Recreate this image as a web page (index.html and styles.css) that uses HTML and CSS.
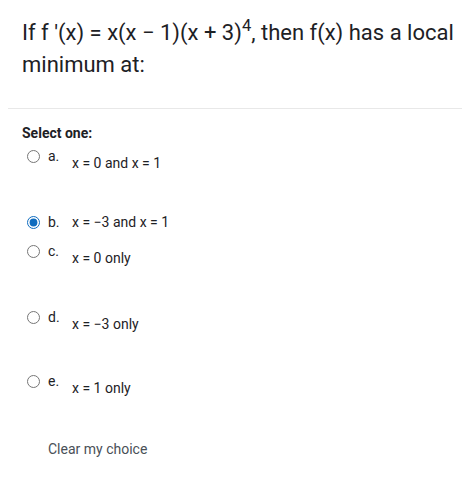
FILE: index.html
```html
<!DOCTYPE html>
<html>
<head>
<meta charset="utf-8">
<link rel="stylesheet" href="styles.css">
</head>
<body>
<div class="page">
  <div class="qtext">If f '(x) = x(x − 1)(x + 3)<sup>4</sup>, then f(x) has a local minimum at:</div>
  <div class="sep"></div>
  <div class="ablock">
    <div class="prompt">Select one:</div>
    <div class="answers">
      <div class="opt ha">
        <input type="radio" name="q" class="radio">
        <span class="letter">a.</span>
        <div class="ans shift7">x = 0 and x = 1</div>
      </div>
      <div class="opt hb">
        <input type="radio" name="q" class="radio" checked>
        <span class="letter">b.</span>
        <div class="ans">x = −3 and x = 1</div>
      </div>
      <div class="opt hc">
        <input type="radio" name="q" class="radio">
        <span class="letter">c.</span>
        <div class="ans shift7">x = 0 only</div>
      </div>
      <div class="opt hd">
        <input type="radio" name="q" class="radio">
        <span class="letter">d.</span>
        <div class="ans shift7">x = −3 only</div>
      </div>
      <div class="opt he">
        <input type="radio" name="q" class="radio">
        <span class="letter">e.</span>
        <div class="ans shift7">x = 1 only</div>
      </div>
    </div>
    <div class="clear">Clear my choice</div>
  </div>
</div>
</body>
</html>
```
FILE: styles.css
```css
html, body {
  margin: 0;
  padding: 0;
  background: #ffffff;
}
body {
  font-family: Roboto, "Liberation Sans", sans-serif;
  color: #1d2125;
}
.page {
  padding: 17px 0 0 8px;
}
.qtext {
  padding: 0 6px 0 14px;
  font-size: 22px;
  line-height: 31.5px;
  color: #1d2125;
}
.qtext sup {
  font-size: 16.5px;
  line-height: 0;
  vertical-align: 9px;
}
.sep {
  margin-top: 28px;
  height: 1px;
  background: #e8e8e8;
}
.ablock {
  padding: 15px 0 0 14px;
}
.prompt {
  font-size: 14px;
  font-weight: 700;
  line-height: 19px;
  margin-bottom: 3px;
}
.opt {
  display: flex;
  align-items: flex-start;
  font-size: 14px;
  line-height: 20px;
}
.radio {
  width: 13px;
  height: 13px;
  margin: 4px 0 0 5px;
  accent-color: #0f6cbf;
}
.letter {
  margin-left: 8px;
  width: 24px;
}
.ans.shift7 { padding-top: 7px; }
.ha { height: 66px; }
.hb { height: 29px; }
.hc { height: 65.5px; }
.hd { height: 64.5px; }
.he { height: 67.5px; }
.clear {
  margin-left: 26px;
  font-size: 14px;
  line-height: 20px;
  color: #495057;
}
```
